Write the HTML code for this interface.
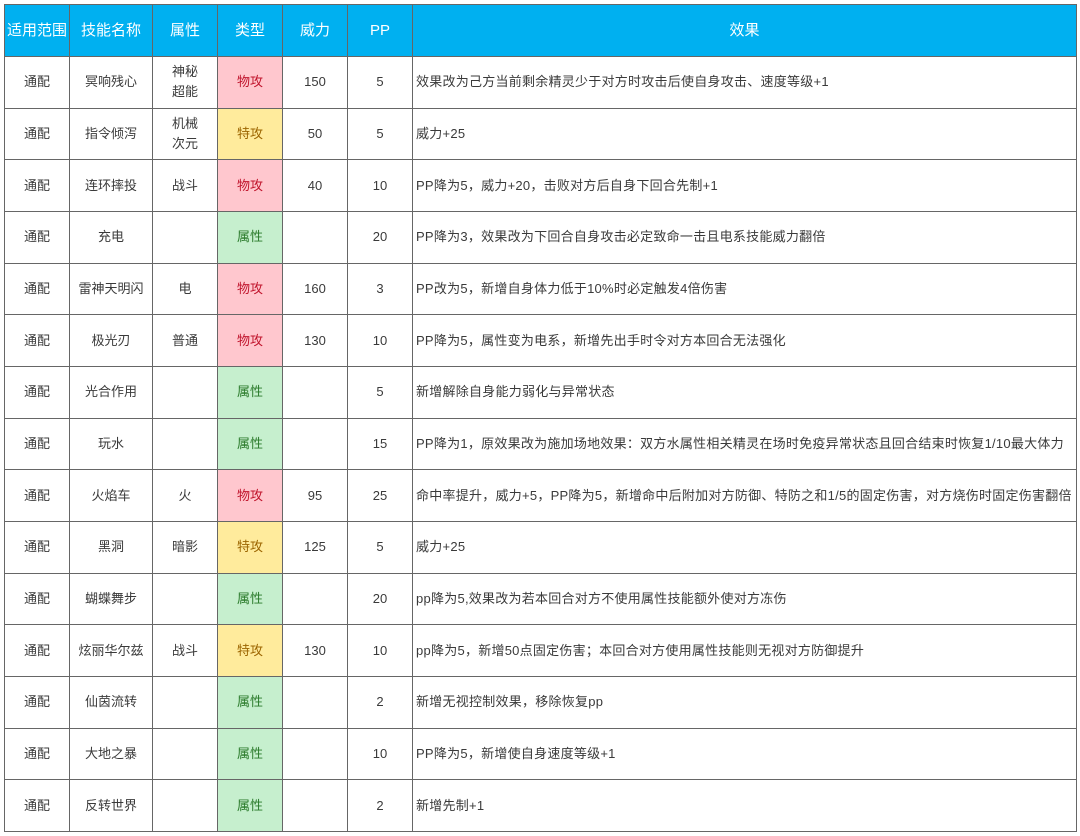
<!DOCTYPE html>
<html><head><meta charset="utf-8"><style>
body{margin:0;background:#fff;width:1080px;height:836px;overflow:hidden}
table{position:absolute;left:4px;top:4px;border-collapse:collapse;table-layout:fixed;font-family:"Liberation Sans","Noto Sans CJK SC",sans-serif;font-size:13px;color:#3a3a3a}
td,th{border:1px solid #666;text-align:center;padding:0;line-height:20px;overflow:hidden;white-space:nowrap}
th{background:#00b0f0;color:#fff;font-weight:normal;height:51px;font-size:15px}
td{height:50.67px}
td.e{text-align:left;padding-left:3px;letter-spacing:0.25px}
.r{background:#ffc7ce;color:#c0142c}.y{background:#ffeb9c;color:#9c6500}.g{background:#c6efce;color:#2a7a2a}
</style></head><body>
<table>
<colgroup><col style="width:65px"><col style="width:83px"><col style="width:65px"><col style="width:65px"><col style="width:65px"><col style="width:65px"><col style="width:664px"></colgroup>
<tr><th>适用范围</th><th>技能名称</th><th>属性</th><th>类型</th><th>威力</th><th>PP</th><th>效果</th></tr>
<tr><td>通配</td><td>冥响残心</td><td>神秘<br>超能</td><td class="r">物攻</td><td>150</td><td>5</td><td class="e">效果改为己方当前剩余精灵少于对方时攻击后使自身攻击、速度等级+1</td></tr>
<tr><td>通配</td><td>指令倾泻</td><td>机械<br>次元</td><td class="y">特攻</td><td>50</td><td>5</td><td class="e">威力+25</td></tr>
<tr><td>通配</td><td>连环摔投</td><td>战斗</td><td class="r">物攻</td><td>40</td><td>10</td><td class="e">PP降为5，威力+20，击败对方后自身下回合先制+1</td></tr>
<tr><td>通配</td><td>充电</td><td></td><td class="g">属性</td><td></td><td>20</td><td class="e">PP降为3，效果改为下回合自身攻击必定致命一击且电系技能威力翻倍</td></tr>
<tr><td>通配</td><td>雷神天明闪</td><td>电</td><td class="r">物攻</td><td>160</td><td>3</td><td class="e">PP改为5，新增自身体力低于10%时必定触发4倍伤害</td></tr>
<tr><td>通配</td><td>极光刃</td><td>普通</td><td class="r">物攻</td><td>130</td><td>10</td><td class="e">PP降为5，属性变为电系，新增先出手时令对方本回合无法强化</td></tr>
<tr><td>通配</td><td>光合作用</td><td></td><td class="g">属性</td><td></td><td>5</td><td class="e">新增解除自身能力弱化与异常状态</td></tr>
<tr><td>通配</td><td>玩水</td><td></td><td class="g">属性</td><td></td><td>15</td><td class="e">PP降为1，原效果改为施加场地效果：双方水属性相关精灵在场时免疫异常状态且回合结束时恢复1/10最大体力</td></tr>
<tr><td>通配</td><td>火焰车</td><td>火</td><td class="r">物攻</td><td>95</td><td>25</td><td class="e">命中率提升，威力+5，PP降为5，新增命中后附加对方防御、特防之和1/5的固定伤害，对方烧伤时固定伤害翻倍</td></tr>
<tr><td>通配</td><td>黑洞</td><td>暗影</td><td class="y">特攻</td><td>125</td><td>5</td><td class="e">威力+25</td></tr>
<tr><td>通配</td><td>蝴蝶舞步</td><td></td><td class="g">属性</td><td></td><td>20</td><td class="e">pp降为5,效果改为若本回合对方不使用属性技能额外使对方冻伤</td></tr>
<tr><td>通配</td><td>炫丽华尔兹</td><td>战斗</td><td class="y">特攻</td><td>130</td><td>10</td><td class="e">pp降为5，新增50点固定伤害；本回合对方使用属性技能则无视对方防御提升</td></tr>
<tr><td>通配</td><td>仙茵流转</td><td></td><td class="g">属性</td><td></td><td>2</td><td class="e">新增无视控制效果，移除恢复pp</td></tr>
<tr><td>通配</td><td>大地之暴</td><td></td><td class="g">属性</td><td></td><td>10</td><td class="e">PP降为5，新增使自身速度等级+1</td></tr>
<tr><td>通配</td><td>反转世界</td><td></td><td class="g">属性</td><td></td><td>2</td><td class="e">新增先制+1</td></tr>
</table>
</body></html>
